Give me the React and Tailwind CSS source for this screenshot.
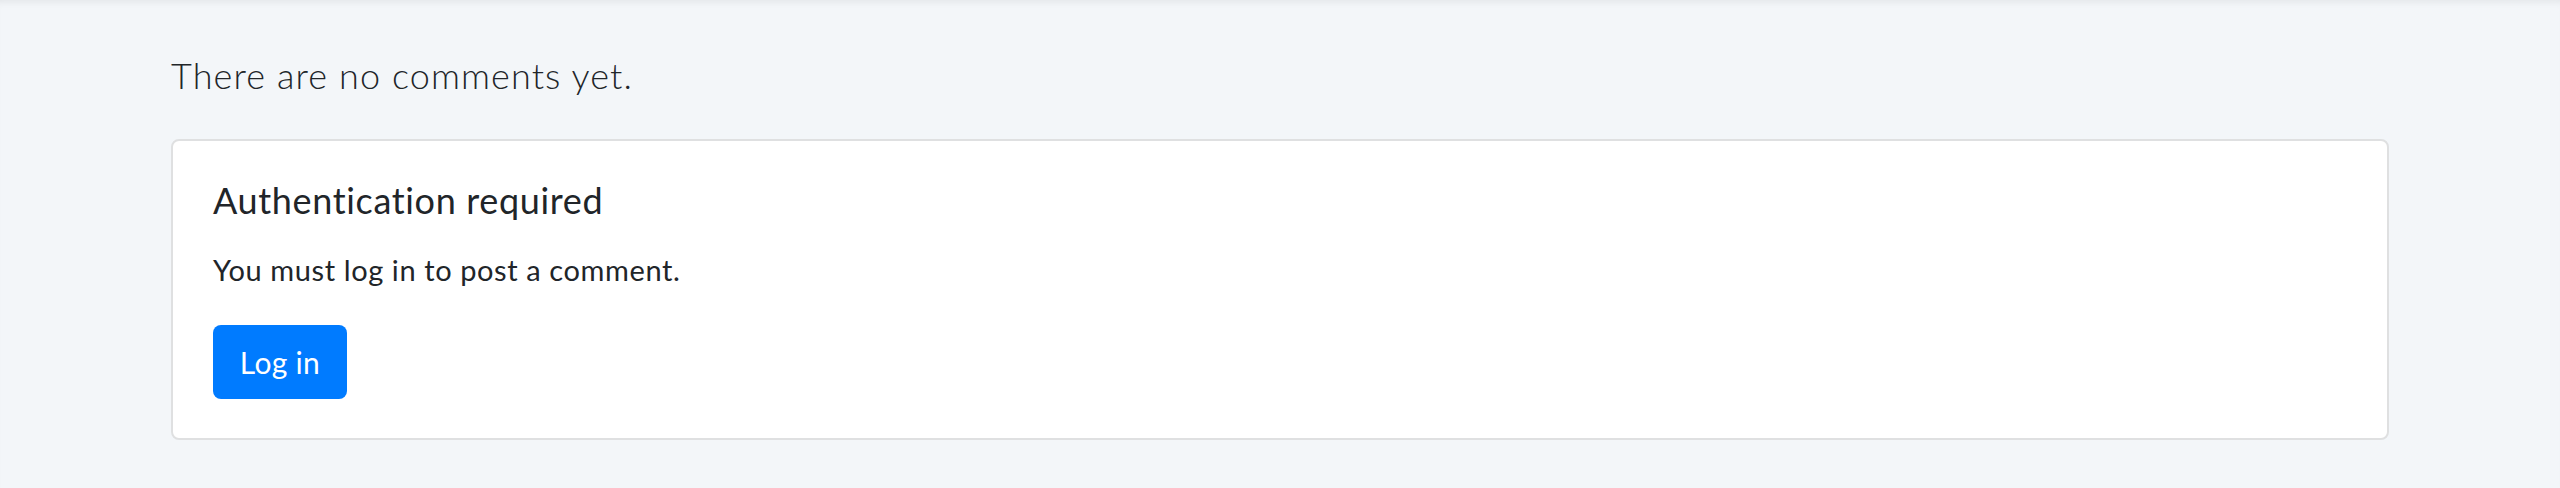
export default function App() {
  return (
    <div
      className="min-h-[488px] w-full bg-[#f3f6f9] text-[#212529] shadow-[inset_0_7px_7px_-5px_rgba(0,0,0,0.07)]"
      style={{ fontFamily: "Lato, 'Open Sans', sans-serif" }}
    >
      <div className="mx-auto w-[2218px] pt-[45px]">
        <p className="mb-[34px] text-[36px] font-light leading-[60px] tracking-[1.1px]">There are no comments yet.</p>
        <div className="rounded-[8px] border-2 border-[#dfe0e1] bg-white px-[40px] pt-[35px] pb-[39px]">
          <h5 className="mb-[22px] text-[36px] font-normal leading-[48px] tracking-[0.65px]">Authentication required</h5>
          <p className="mb-[31px] text-[29px] leading-[48px] tracking-[0.6px]">You must log in to post a comment.</p>
          <button className="flex h-[74px] w-[134px] items-center justify-center rounded-[8px] bg-[#007bff] text-[30px] tracking-[0.3px] text-white">
            Log in
          </button>
        </div>
      </div>
    </div>
  );
}
